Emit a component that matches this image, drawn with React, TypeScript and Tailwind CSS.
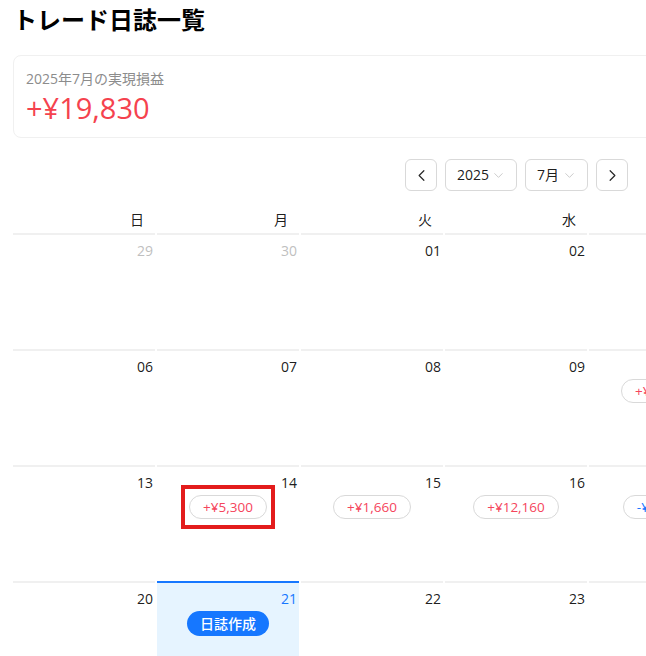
import { ChevronLeft, ChevronRight, ChevronDown } from 'lucide-react';

type Cell = {
  day: string;
  muted?: boolean;
  today?: boolean;
  pnl?: number;
};

const weeks: Cell[][] = [
  [
    { day: '29', muted: true },
    { day: '30', muted: true },
    { day: '01' },
    { day: '02' },
    { day: '03' },
  ],
  [
    { day: '06' },
    { day: '07' },
    { day: '08' },
    { day: '09' },
    { day: '10', pnl: 2400 },
  ],
  [
    { day: '13' },
    { day: '14', pnl: 5300 },
    { day: '15', pnl: 1660 },
    { day: '16', pnl: 12160 },
    { day: '17', pnl: -1690 },
  ],
  [
    { day: '20' },
    { day: '21', today: true },
    { day: '22' },
    { day: '23' },
    { day: '24' },
  ],
];

const weekdays = ['日', '月', '火', '水', '木'];

function formatPnl(v: number) {
  const sign = v >= 0 ? '+' : '-';
  return `${sign}¥${Math.abs(v).toLocaleString('en-US')}`;
}

function DayCell({ cell }: { cell: Cell }) {
  const boxClass = cell.today
    ? 'border-[#1677ff] bg-[#e6f4ff]'
    : 'border-[#f0f0f0] bg-white';
  const numClass = cell.today
    ? 'text-[#1677ff]'
    : cell.muted
      ? 'text-[#bfbfbf]'
      : 'text-black/90';

  return (
    <div className="w-[144px] shrink-0 px-[1px]">
      <div className={`h-[116px] border-t-2 ${boxClass} pt-1`}>
        <div className={`pr-[2px] text-right text-sm leading-6 ${numClass}`}>{cell.day}</div>
        {cell.pnl !== undefined && (
          <div className="flex justify-center">
            <span
              className={`flex h-6 items-center justify-center whitespace-nowrap rounded-full border border-[#d9d9d9] bg-white px-[13px] text-[13.5px] ${
                cell.pnl >= 0 ? 'text-[#f5455c]' : 'text-[#1677ff]'
              }`}
            >
              {formatPnl(cell.pnl)}
            </span>
          </div>
        )}
        {cell.today && (
          <div className="flex justify-center">
            <button className="h-[25px] w-[82px] rounded-full bg-[#1677ff] text-sm font-medium text-white">
              日誌作成
            </button>
          </div>
        )}
      </div>
    </div>
  );
}

export default function App() {
  return (
    <div
      className="relative h-[656px] w-[646px] overflow-hidden bg-white text-black/90"
      style={{ fontFamily: '"Open Sans", "Noto Sans CJK JP", sans-serif' }}
    >
      <div className="pl-[13px]">
        <h1 className="pt-1 text-2xl font-bold leading-8 text-black">トレード日誌一覧</h1>

        <div className="mt-[19px] w-[1000px] rounded-lg border border-[#f0f0f0] px-3 pb-[11px] pt-3">
          <div className="text-sm leading-[22px] text-[#8c8c8c]">2025年7月の実現損益</div>
          <div className="text-[29px] leading-9 text-[#f5424e]">+¥19,830</div>
        </div>
      </div>

      <div className="mt-[21px] flex w-[628px] justify-end gap-2">
        <button className="flex h-8 w-8 items-center justify-center rounded-md border border-[#d9d9d9] bg-white">
          <ChevronLeft size={19} strokeWidth={1.5} className="text-black/85" />
        </button>
        <div className="flex h-8 w-[72px] items-center justify-between rounded-md border border-[#d9d9d9] pl-[11px] pr-[10px] text-sm">
          <span>2025</span>
          <ChevronDown size={15} strokeWidth={1.3} className="text-[#bfbfbf]" />
        </div>
        <div className="flex h-8 w-[63px] items-center justify-between rounded-md border border-[#d9d9d9] pl-[11px] pr-[10px] text-sm">
          <span>7月</span>
          <ChevronDown size={15} strokeWidth={1.3} className="text-[#bfbfbf]" />
        </div>
        <button className="flex h-8 w-8 items-center justify-center rounded-md border border-[#d9d9d9] bg-white">
          <ChevronRight size={19} strokeWidth={1.5} className="text-black/85" />
        </button>
      </div>

      <div className="ml-[12px] w-[720px]">
        <div className="mt-[18px] flex pb-[2px]">
          {weekdays.map((w) => (
            <div key={w} className="w-[144px] shrink-0 pr-[12px] text-right text-sm leading-[22px]">
              {w}
            </div>
          ))}
        </div>
        {weeks.map((week, i) => (
          <div key={i} className="flex">
            {week.map((cell) => (
              <DayCell key={cell.day + i} cell={cell} />
            ))}
          </div>
        ))}
      </div>

      <div className="absolute left-[181px] top-[485px] h-[44px] w-[94px] border-4 border-[#e31c1c]" />
    </div>
  );
}
